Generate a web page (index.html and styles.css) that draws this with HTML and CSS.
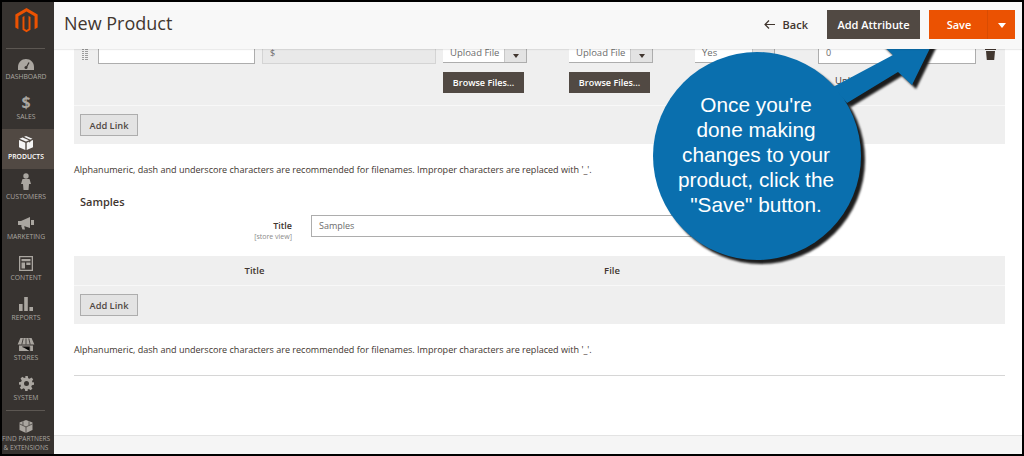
FILE: index.html
```html
<!DOCTYPE html>
<html lang="en">
<head>
<meta charset="utf-8">
<title>New Product</title>
<link rel="stylesheet" href="styles.css">
</head>
<body>
<div class="frame">
  <nav class="sidebar">
    <div class="logo">
      <svg width="23" height="26" viewBox="0 0 24 28"><path fill="#eb5202" d="M12 0 24 7v14l-3.300 1.900V8.900L12 3.900 3.300 8.900v14L0 21V7z"/><path fill="#eb5202" d="M12 7.300 16.300 9.800V23.500L12 26 7.700 23.500V9.800l2.100-1.200v13.800L12 23.700l2.200-1.300V8.600z"/></svg>
    </div>
    <div class="nav-sep"></div>
    <a class="nav-item">
      <svg width="16" height="11" viewBox="0 0 16 11"><path fill="#aaa6a0" d="M8 0C3.600 0 0 3.500 0 8v3h16V8c0-4.500-3.600-8-8-8z"/><path stroke="#373330" stroke-width="1.300" d="M8 9 11 3.500"/><circle cx="8" cy="8.500" r="1.500" fill="#373330"/></svg>
      <span>DASHBOARD</span>
    </a>
    <a class="nav-item">
      <b class="dollar">$</b>
      <span>SALES</span>
    </a>
    <a class="nav-item active">
      <svg width="14" height="14" viewBox="0 0 14 14"><path fill="#f4f4f4" d="M7 0 13.500 2.800 7 5.600.5 2.800zM0 4l6.300 2.700V14L0 11.200zM14 4 7.700 6.700V14l6.300-2.800z"/><path fill="#514943" d="m3.500 1.400 6.500 2.900.1 2.200 1.300-.6V3.700L5 .8z"/></svg>
      <span>PRODUCTS</span>
    </a>
    <a class="nav-item">
      <svg width="10" height="17" viewBox="0 0 10 17"><circle cx="5" cy="3" r="2.700" fill="#aaa6a0"/><path fill="#aaa6a0" d="M1.500 6h7L10 11H8l-.5 6h-5L2 11H0z"/></svg>
      <span>CUSTOMERS</span>
    </a>
    <a class="nav-item">
      <svg width="16" height="13" viewBox="0 0 16 13"><path fill="#aaa6a0" d="M0 4h3l9-4v11L3 8H0zM13 3h3v5h-3zM3 8.500h3l1 4H4.500z"/></svg>
      <span>MARKETING</span>
    </a>
    <a class="nav-item">
      <svg width="14" height="15" viewBox="0 0 14 15"><path fill="#aaa6a0" fill-rule="evenodd" d="M0 0h14v15H0zm1.300 1.300v12.400h11.400V1.300zM2.500 3h9v2.200h-9zM2.500 6.500h3.500v6H2.500zM7.300 6.500h4.200v2.500H7.300z"/></svg>
      <span>CONTENT</span>
    </a>
    <a class="nav-item">
      <svg width="14" height="14" viewBox="0 0 14 14"><path fill="#aaa6a0" d="M0 7h3.600v7H0zM5.200 0h3.600v14H5.200zM10.400 10H14v4h-3.600z"/></svg>
      <span>REPORTS</span>
    </a>
    <a class="nav-item">
      <svg width="18" height="13" viewBox="0 0 18 14"><path fill="#aaa6a0" d="M3 0h12l3 7H0zM1.500 8h15v6h-15z"/><path stroke="#373330" stroke-width=".9" d="M6 .5 4.500 7M9 .5V7M12 .5 13.500 7M5 9.500h8v4.500"/></svg>
      <span>STORES</span>
    </a>
    <a class="nav-item">
      <svg width="15" height="15" viewBox="0 0 24 24"><path fill="#aaa6a0" fill-rule="evenodd" d="m10 0h4l.7 3.400 2.300 1 2.900-1.900 2.800 2.800-1.900 2.900 1 2.300L24 10v4l-3.400.7-1 2.300 1.900 2.900-2.800 2.800-2.900-1.900-2.300 1L14 24h-4l-.7-3.400-2.300-1-2.900 1.900-2.800-2.800 1.900-2.900-1-2.300L0 14v-4l3.400-.7 1-2.300-1.900-2.900 2.800-2.800 2.900 1.900 2.300-1zM12 8a4 4 0 1 0 0 8 4 4 0 0 0 0-8z"/></svg>
      <span>SYSTEM</span>
    </a>
    <div class="nav-sep"></div>
    <a class="nav-item nav-last">
      <svg width="14" height="13" viewBox="0 0 15 15"><path fill="#aaa6a0" d="M7.500 0 15 3v8.500L7.500 15 0 11.500V3z"/><path stroke="#373330" stroke-width=".8" fill="none" d="M0 4.500 7.500 8 15 4.500M7.500 8v7M4 1.500v4.500M11 1.500v4.500"/></svg>
      <span>FIND PARTNERS<br>&amp; EXTENSIONS</span>
    </a>
  </nav>

  <main class="main">
    <header class="topbar">
      <h1 class="title">New Product</h1>
      <div class="actions">
        <a class="back"><svg width="11" height="9" viewBox="0 0 11 9"><path fill="none" stroke="#41362f" stroke-width="1.200" d="M5 .5 1 4.500l4 4M1 4.500h10"/></svg>Back</a>
        <button class="btn-dark btn-attr">Add Attribute</button>
        <div class="save"><span class="save-label">Save</span><span class="save-arrow"><i class="caret caret-white"></i></span></div>
      </div>
    </header>

    <div class="content">
      <section class="panel">
        <div class="link-row">
          <div class="handle"></div>
          <div class="box box-title"></div>
          <div class="box box-price">$</div>
          <div class="upload">
            <div class="picker"><span>Upload File</span><em><i class="caret"></i></em></div>
            <button class="btn-dark btn-browse">Browse Files...</button>
          </div>
          <div class="upload">
            <div class="picker"><span>Upload File</span><em><i class="caret"></i></em></div>
            <button class="btn-dark btn-browse">Browse Files...</button>
          </div>
          <div class="yes-col"><div class="picker picker-yes"><span>Yes</span><em><i class="caret"></i></em></div></div>
          <div class="qty-col">
            <div class="box box-qty">0</div>
            <div class="unlimited">Unlimited</div>
          </div>
          <svg class="trash" width="11" height="13" viewBox="0 0 11 13"><path fill="#41362f" d="M0 1.500h3.500V0h4v1.500H11V3H0zM1 4h9l-.8 9H1.800z"/></svg>
        </div>
        <div class="panel-foot"><button class="btn-light">Add Link</button></div>
      </section>
      <p class="note note-first">Alphanumeric, dash and underscore characters are recommended for filenames. Improper characters are replaced with '_'.</p>

      <h2 class="section-title">Samples</h2>
      <div class="field">
        <div class="field-label"><b>Title</b><small>[store view]</small></div>
        <div class="box box-samples">Samples</div>
      </div>
      <section class="panel">
        <div class="thead"><b class="th-title">Title</b><b class="th-file">File</b></div>
        <div class="panel-foot"><button class="btn-light">Add Link</button></div>
      </section>
      <p class="note note-second">Alphanumeric, dash and underscore characters are recommended for filenames. Improper characters are replaced with '_'.</p>
      <div class="rule"></div>
    </div>
    <footer class="footer"></footer>
  </main>

  <div class="callout">
    <svg class="callout-art" width="310" height="240" viewBox="0 0 310 240">
      <g fill="#1c1c1c" class="callout-shadow">
        <circle cx="109" cy="124" r="104"/>
        <path d="M185 55 245 23 227 6h60l-23 47-14-13-51 31z"/>
      </g>
      <g fill="#0a6fae">
        <circle cx="105" cy="120" r="104"/>
        <path d="M181 51 241 19 223 2h60l-23 47-14-13-51 31z"/>
      </g>
    </svg>
    <p class="callout-text">Once you're<br>done making<br>changes to your<br>product, click the<br>"Save" button.</p>
  </div>
</div>
</body>
</html>
```
FILE: styles.css
```css
* { box-sizing: border-box; }
html, body { margin: 0; height: 100%; }
body { font-family: "Open Sans", "Liberation Sans", sans-serif; color: #41362f; overflow: hidden; }
button { font-family: inherit; border: 0; padding: 0; }
.frame { position: relative; width: 1024px; height: 456px; border: 2px solid #000; display: flex; background: #fff; overflow: hidden; }

.sidebar { width: 52px; flex: none; background: #373330; display: flex; flex-direction: column; align-items: stretch; }
.logo { height: 46px; padding: 6px 3px 0 0; display: flex; justify-content: center; align-items: flex-start; }
.nav-sep { height: 1px; margin: 0 9px 0 4px; background: #5c5752; flex: none; }
.nav-item { height: 40.100px; flex: none; display: flex; flex-direction: column; align-items: center; justify-content: flex-end; gap: 2px; padding: 0 4px 8px 0; color: #aaa6a0; font-size: 6.800px; line-height: 9px; white-space: nowrap; }
.nav-item.active { background: #514943; color: #fff; font-weight: 600; }
.dollar { font-size: 16px; line-height: 15px; font-weight: 700; color: #aaa6a0; }
.nav-last { height: auto; flex: 1; justify-content: flex-start; padding: 9px 4px 0 0; gap: 1px; text-align: center; font-size: 6.500px; }

.main { flex: 1; min-width: 0; display: flex; flex-direction: column; }
.topbar { height: 47px; flex: none; background: #f8f8f8; display: flex; align-items: center; justify-content: space-between; padding: 0 7px 3px 10px; box-shadow: 0 1px 1px rgba(0,0,0,.08); position: relative; z-index: 1; }
.title { margin: 0 0 2px; font-size: 18px; font-weight: 400; color: #41362f; }
.actions { display: flex; align-items: center; }
.back { display: flex; align-items: center; gap: 8px; font-size: 11px; font-weight: 600; margin-right: 19px; }
.btn-dark { background: #514943; color: #fff; font-weight: 600; font-size: 11px; }
.btn-attr { width: 93px; height: 29px; margin-right: 9px; }
.save { width: 86px; height: 29px; background: #eb5202; color: #fff; font-size: 11px; font-weight: 600; display: flex; }
.save-label { width: 59px; padding-left: 2px; display: flex; align-items: center; justify-content: center; border-right: 1px solid #d94c02; }
.save-arrow { flex: 1; padding-top: 2px; display: flex; align-items: center; justify-content: center; }
.caret { display: block; width: 0; height: 0; border: 4px solid transparent; border-top: 5px solid #41362f; border-bottom: 0; }
.caret-white { border-top-color: #fff; }

.content { flex: 1; padding: 0 17px 0 20px; display: flex; flex-direction: column; }
.panel { background: #efefef; }
.link-row { height: 57px; display: flex; align-items: flex-start; padding-left: 8px; border-bottom: 1px solid #f8f8f8; }
.handle { width: 6px; height: 11px; margin-right: 10px; background: linear-gradient(90deg, transparent 2.500px, #efefef 2.500px 3.500px, transparent 3.500px), repeating-linear-gradient(#9c9c9c 0 1px, transparent 1px 2px); }
.box { height: 15px; background: #fff; border: 1px solid #adadad; border-top: 0; font-size: 9px; line-height: 8px; padding: 0 7px; color: #6c6c6c; }
.box-title { width: 157px; margin-right: 7px; }
.box-price { width: 174px; margin-right: 7px; background: #e9e9e9; border-color: #d4d4d4; }
.upload { width: 84px; margin-right: 42px; }
.picker { display: flex; height: 14px; width: 84px; background: #fff; border-right: 1px solid #adadad; border-bottom: 1px solid #adadad; font-size: 9.500px; color: #6c6c6c; line-height: 7px; }
.picker span { flex: 1; padding-left: 7px; }
.picker em { width: 22px; background: #e3e3e3; display: flex; align-items: center; justify-content: center; border-left: 1px solid #c8c8c8; }
.picker .caret { border-width: 3px; border-top-width: 4px; border-bottom-width: 0; }
.btn-browse { display: block; width: 81px; height: 21px; margin-top: 9px; font-size: 9px; }
.yes-col { margin-right: 43px; }
.picker-yes { width: 80px; }
.qty-col { width: 158px; margin-right: 9px; }
.box-qty { height: 15px; line-height: 8px; }
.unlimited { font-size: 9.500px; margin: 10px 0 0 17px; color: #41362f; }
.trash { margin-top: -2px; }
.panel-foot { height: 38px; padding: 8px 6px; }
.btn-light { display: block; width: 58px; height: 22px; background: #e3e3e3; border: 1px solid #adadad; color: #514943; font-size: 9.300px; font-weight: 600; }

.note { margin: 0; font-size: 9.050px; line-height: 14px; color: #41362f; }
.note-first { margin-top: 19px; }
.section-title { margin: 17px 0 0 6px; font-size: 11px; line-height: 16px; font-weight: 600; }
.field { display: flex; margin-top: 5px; height: 41px; align-items: flex-start; }
.field-label { width: 218px; text-align: right; display: flex; flex-direction: column; font-size: 9px; padding-top: 4px; }
.field-label b { font-weight: 600; line-height: 13px; }
.field-label small { font-size: 7px; line-height: 9px; color: #8a8a8a; }
.box-samples { width: 380px; height: 22px; margin-left: 19px; border: 1px solid #adadad; line-height: 20px; }
.thead { height: 30px; display: flex; align-items: center; border-bottom: 1px solid #f8f8f8; font-size: 9.500px; }
.thead b { font-weight: 600; }
.th-title { width: 361px; text-align: center; }
.th-file { width: 354px; text-align: center; }
.note-second { margin-top: 19px; }
.rule { height: 1px; background: #d6d6d6; margin-top: 18px; }
.footer { height: 19px; flex: none; background: #f5f5f5; border-top: 1px solid #e3e3e3; }

.callout { position: absolute; left: 650px; top: 34px; width: 310px; height: 240px; }
.callout-art { display: block; overflow: visible; }
.callout-shadow { filter: blur(1px); }
.callout-text { position: absolute; left: -1px; top: 56px; width: 210px; margin: 0; text-align: center; font-family: "Liberation Sans", Arial, sans-serif; font-size: 20.800px; line-height: 25px; color: #fff; }
```
